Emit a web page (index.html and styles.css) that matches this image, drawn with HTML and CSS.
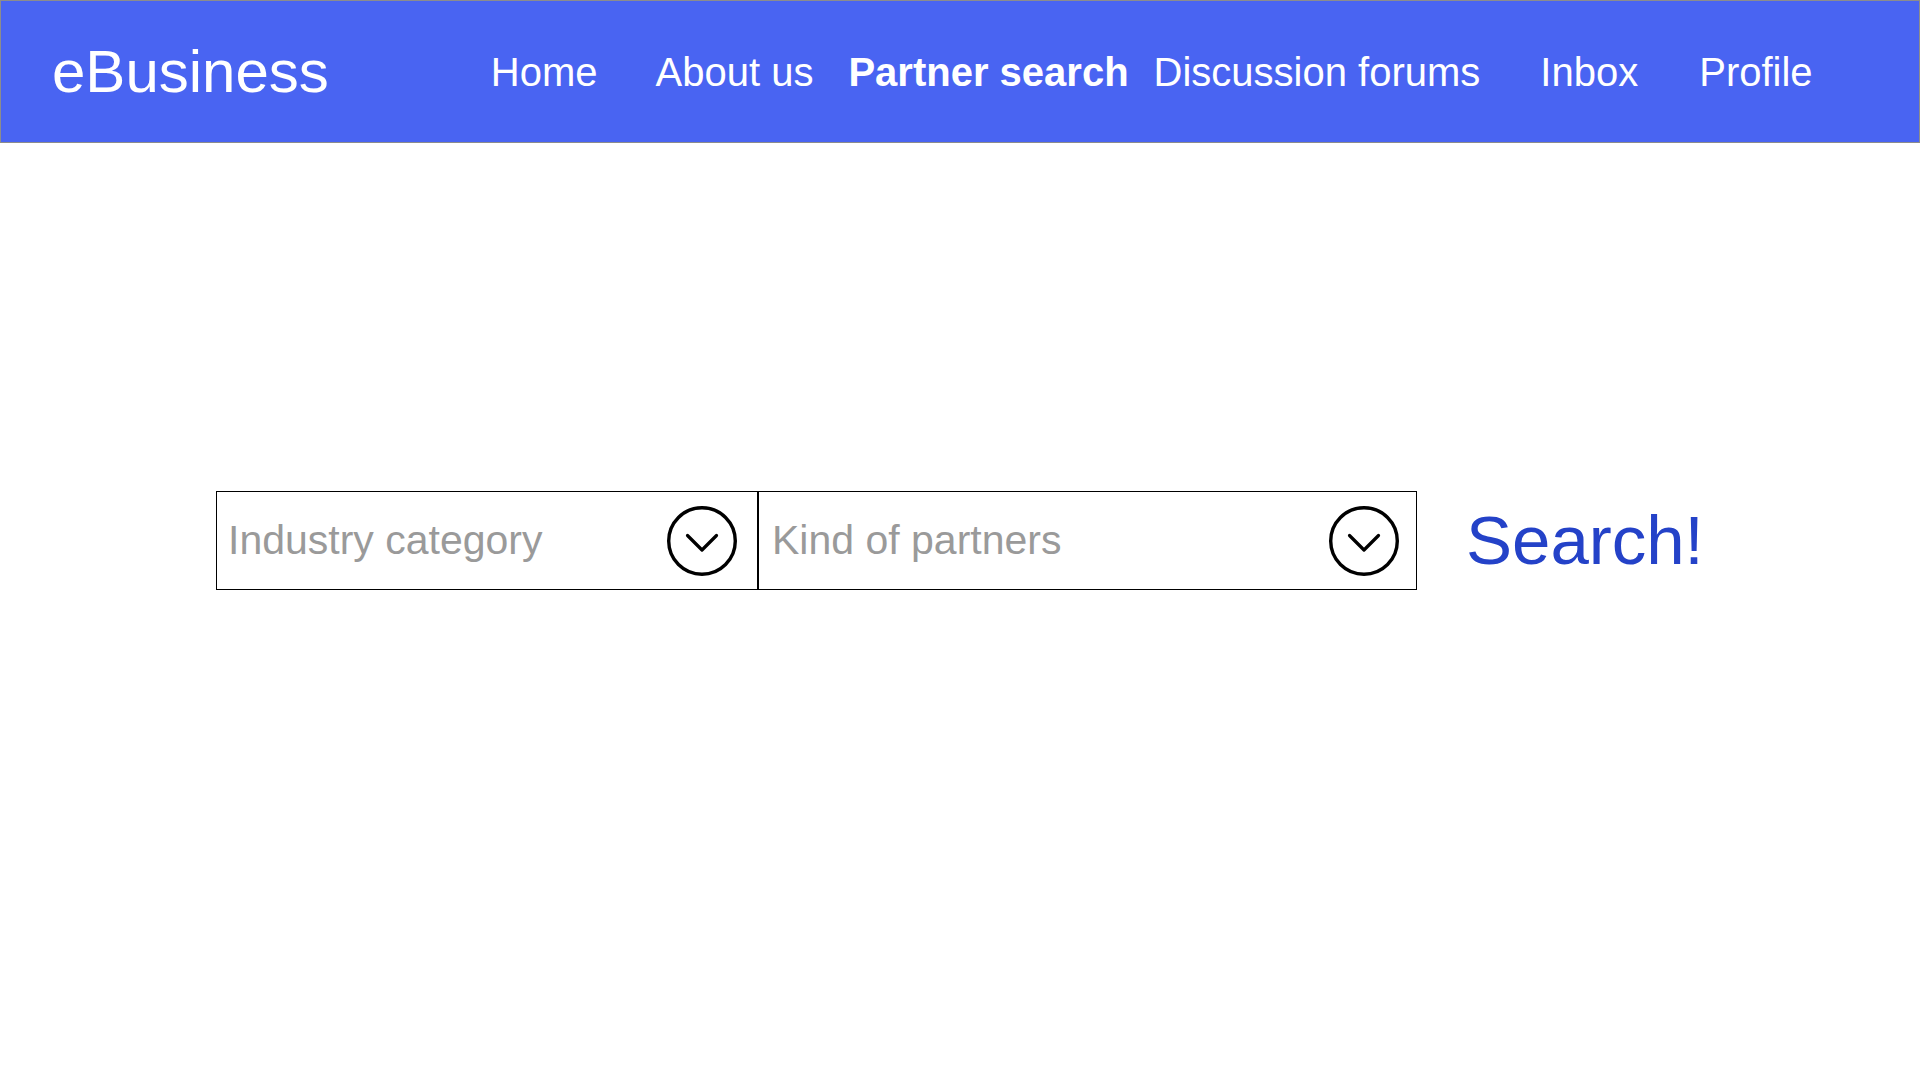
FILE: index.html
```html
<!DOCTYPE html>
<html lang="en">
<head>
<meta charset="utf-8">
<title>eBusiness – Partner search</title>
<link rel="stylesheet" href="styles.css">
</head>
<body>
<header class="topbar">
  <div class="logo">eBusiness</div>
  <nav class="nav">
    <a class="nav-link" href="#">Home</a>
    <a class="nav-link" href="#">About us</a>
    <a class="nav-link nav-link--active nav-link--near" href="#">Partner search</a>
    <a class="nav-link nav-link--nearer" href="#">Discussion forums</a>
    <a class="nav-link nav-link--far" href="#">Inbox</a>
    <a class="nav-link nav-link--farther" href="#">Profile</a>
  </nav>
</header>
<main class="search-area">
  <div class="select select--industry">
    <span class="select-label">Industry category</span>
    <svg class="chevron-icon" viewBox="0 0 72 72" width="72" height="72" aria-hidden="true">
      <circle cx="36" cy="36" r="33.3" fill="none" stroke="#000" stroke-width="3.4"/>
      <polyline points="21.5,30.5 36,45 50.5,30.5" fill="none" stroke="#000" stroke-width="3.2" stroke-linecap="round" stroke-linejoin="round"/>
    </svg>
  </div>
  <div class="select select--kind">
    <span class="select-label select-label--kind">Kind of partners</span>
    <svg class="chevron-icon" viewBox="0 0 72 72" width="72" height="72" aria-hidden="true">
      <circle cx="36" cy="36" r="33.3" fill="none" stroke="#000" stroke-width="3.4"/>
      <polyline points="21.5,30.5 36,45 50.5,30.5" fill="none" stroke="#000" stroke-width="3.2" stroke-linecap="round" stroke-linejoin="round"/>
    </svg>
  </div>
  <a class="search-button" href="#">Search!</a>
</main>
</body>
</html>
```

FILE: styles.css
```css
* {
  box-sizing: border-box;
}

body {
  margin: 0;
  background: #ffffff;
  font-family: "Liberation Sans", Arial, Helvetica, sans-serif;
}

.topbar {
  display: flex;
  align-items: center;
  width: 1920px;
  height: 143px;
  padding-left: 51px;
  background: #4964f2;
  border: 1px solid #8c8c8c;
  color: #ffffff;
}

.logo {
  font-size: 60px;
  line-height: 1;
  white-space: nowrap;
}

.nav {
  display: flex;
  align-items: center;
  margin-left: 162px;
}

.nav-link {
  color: #ffffff;
  text-decoration: none;
  font-size: 40px;
  line-height: 1;
  white-space: nowrap;
}

.nav-link + .nav-link {
  margin-left: 58px;
}

.nav-link.nav-link--near {
  margin-left: 35px;
}

.nav-link.nav-link--nearer {
  margin-left: 25px;
}

.nav-link.nav-link--far {
  margin-left: 60px;
}

.nav-link.nav-link--farther {
  margin-left: 61px;
}

.nav-link--active {
  font-weight: bold;
}

.search-area {
  display: flex;
  align-items: center;
  padding-top: 348px;
  padding-left: 216px;
}

.select {
  display: flex;
  align-items: center;
  justify-content: space-between;
  height: 99px;
  border: 1px solid #000000;
  padding-left: 11px;
  padding-right: 19px;
}

.select--industry {
  width: 542px;
}

.select--kind {
  width: 659px;
  padding-right: 16px;
}

.select-label {
  font-size: 41px;
  color: #9a9a9a;
  white-space: nowrap;
}

.select-label--kind {
  padding-left: 2px;
}

.chevron-icon {
  display: block;
  width: 72px;
  height: 72px;
  flex-shrink: 0;
}

.search-button {
  margin-left: 49px;
  font-size: 69px;
  line-height: 1;
  color: #2442c8;
  text-decoration: none;
  white-space: nowrap;
}
```
